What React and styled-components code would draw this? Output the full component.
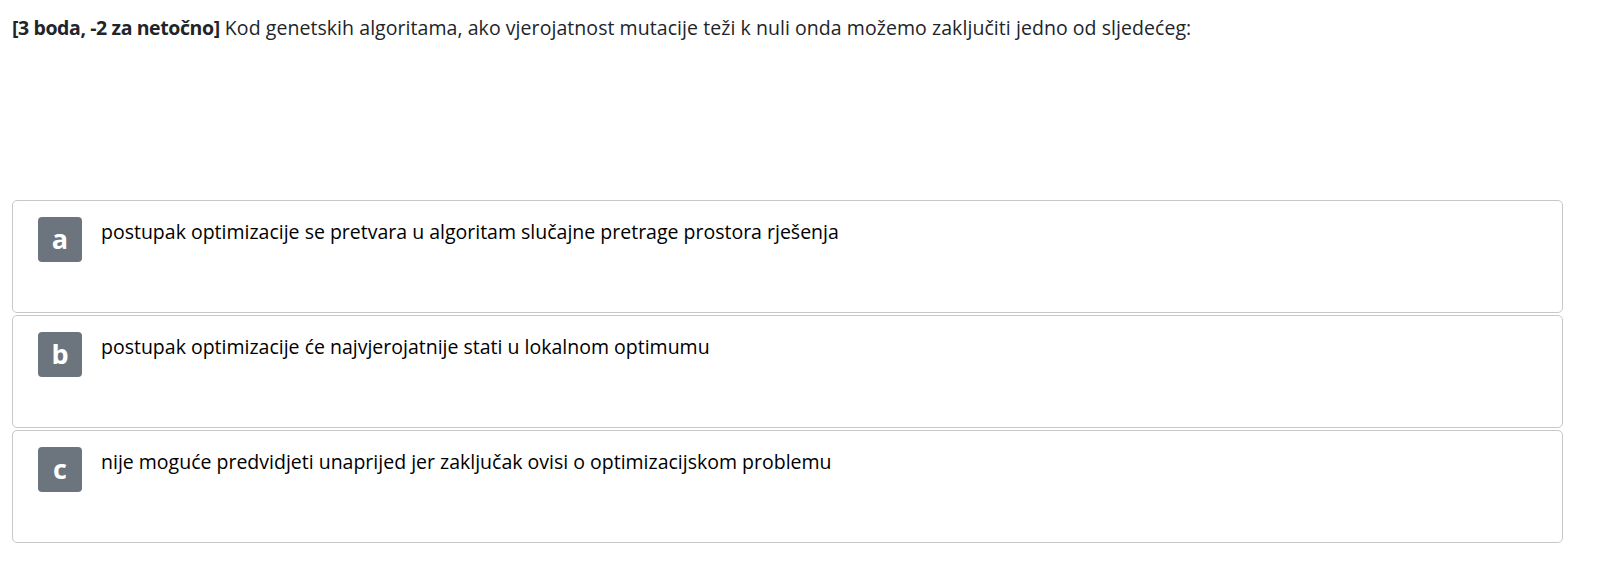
import React from "react";
import styled, { createGlobalStyle } from "styled-components";

const Global = createGlobalStyle`
  html, body { margin: 0; padding: 0; background: #fff; }
  body { font-family: "Open Sans", "Noto Sans", sans-serif; color: #212529; }
`;

const Page = styled.div`
  padding: 13px 45px 0 12px;
`;

const Question = styled.p`
  margin: 0;
  font-size: 19.5px;
  line-height: 29px;
  letter-spacing: 0.06px;
  color: #212529;
`;

const Points = styled.strong`
  font-weight: 700;
  letter-spacing: -0.4px;
`;

const Options = styled.div`
  margin-top: 158px;
  display: flex;
  flex-direction: column;
  gap: 2.5px;
`;

const Card = styled.div`
  box-sizing: border-box;
  height: 112.5px;
  border: 1px solid #c8c8c8;
  border-radius: 5px;
  padding: 16px 20px 0 25px;
  display: flex;
  align-items: flex-start;
  gap: 19px;
  background: #fff;
`;

const Badge = styled.div`
  flex: none;
  width: 44px;
  height: 45px;
  border-radius: 4px;
  background: #6c757d;
  color: #fff;
  font-weight: 700;
  font-size: 27px;
  display: flex;
  align-items: center;
  justify-content: center;
  line-height: 1;
  padding-bottom: 2px;
  box-sizing: border-box;
`;

const OptionText = styled.div`
  font-size: 19.5px;
  line-height: 29px;
  color: #000;
`;

const options = [
  { key: "a", text: "postupak optimizacije se pretvara u algoritam slučajne pretrage prostora rješenja" },
  { key: "b", text: "postupak optimizacije će najvjerojatnije stati u lokalnom optimumu" },
  { key: "c", text: "nije moguće predvidjeti unaprijed jer zaključak ovisi o optimizacijskom problemu" },
];

export default function App() {
  return (
    <>
      <Global />
      <Page>
        <Question>
          <Points>[3 boda, -2 za netočno]</Points> Kod genetskih algoritama, ako vjerojatnost mutacije teži k nuli onda možemo zaključiti jedno od sljedećeg:
        </Question>
        <Options>
          {options.map((o) => (
            <Card key={o.key}>
              <Badge>{o.key}</Badge>
              <OptionText>{o.text}</OptionText>
            </Card>
          ))}
        </Options>
      </Page>
    </>
  );
}
